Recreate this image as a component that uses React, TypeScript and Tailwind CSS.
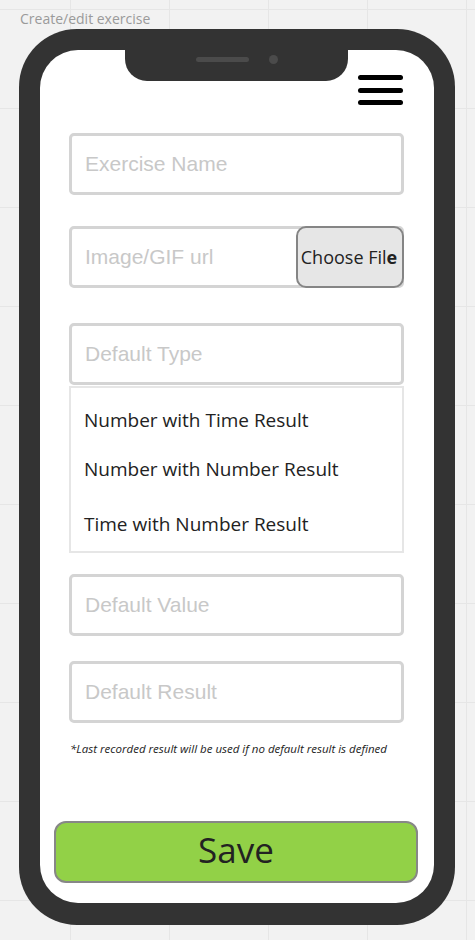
import { useState } from "react";

const typeOptions = [
  "Number with Time Result",
  "Number with Number Result",
  "Time with Number Result",
];

function TextField({ placeholder }: { placeholder: string }) {
  return (
    <input
      type="text"
      placeholder={placeholder}
      className="block w-full h-[62px] rounded-[5px] border-[3px] border-[#d4d4d4] bg-white px-[13px] font-['Liberation_Sans',Arial,sans-serif] text-[21px] text-[#333] placeholder:text-[#c8c8c8] outline-none"
    />
  );
}

export default function App() {
  const [type, setType] = useState("");

  return (
    <div className="relative w-full h-[940px] overflow-hidden bg-[#f2f2f2] bg-[linear-gradient(#e6e6e6_1px,transparent_1px),linear-gradient(90deg,#e6e6e6_1px,transparent_1px)] bg-[size:99px_99px] bg-[position:70px_9px] font-['Open_Sans',sans-serif]">
      {/* Page label */}
      <div className="pt-[9px] pl-[20px] text-[14px] leading-[19px] text-[#9a9a9a]">
        Create/edit exercise
      </div>

      {/* Phone frame */}
      <div className="mt-[1px] ml-[19px] w-[436px] h-[896px] rounded-[58px] bg-[#333333] pt-[21px] pb-[22px] px-[21px]">
        <div className="relative h-full w-full rounded-[38px] bg-white">
          {/* Notch */}
          <div className="absolute left-[85px] top-0 flex h-[31px] w-[223px] items-center justify-center gap-[20px] rounded-b-[22px] bg-[#333333] pb-[13px]">
            <div className="h-[5px] w-[53px] rounded-full bg-[#4b4b4b]" />
            <div className="h-[9px] w-[9px] rounded-full bg-[#4b4b4b]" />
          </div>

          {/* Header */}
          <div className="flex justify-end pt-[25px] pr-[31px]">
            <button className="flex w-[45px] flex-col gap-[7.5px]">
              <span className="block h-[5px] w-full rounded-full bg-black" />
              <span className="block h-[5px] w-full rounded-full bg-black" />
              <span className="block h-[5px] w-full rounded-full bg-black" />
            </button>
          </div>

          {/* Form */}
          <div className="px-[29px] pr-[30px] pt-[28px]">
            <TextField placeholder="Exercise Name" />

            <div className="mt-[31px] flex h-[62px] rounded-[5px] border-[3px] border-[#d4d4d4] bg-white">
              <input
                type="text"
                placeholder="Image/GIF url"
                className="min-w-0 flex-1 bg-transparent pl-[13px] font-['Liberation_Sans',Arial,sans-serif] text-[21px] text-[#333] placeholder:text-[#c8c8c8] outline-none"
              />
              <button className="-my-[3px] -mr-[3px] flex w-[108px] items-center justify-center overflow-hidden whitespace-nowrap rounded-[10px] border-2 border-[#858585] bg-[#e6e6e6] pr-[2px] text-[18px] text-[#222]">
                Choose Fil<b>e</b>
              </button>
            </div>

            <div className="mt-[35px]">
              <TextField placeholder="Default Type" />
              <div className="mt-[1px] border-2 border-[#e6e6e6] bg-white pl-[13px] pt-[20px] pb-[15px] text-[19px] leading-[24px] text-[#222]">
                {typeOptions.map((opt, i) => (
                  <div
                    key={opt}
                    onClick={() => setType(opt)}
                    className={`cursor-pointer ${
                      i === 1 ? "mt-[25px]" : i === 2 ? "mt-[31px]" : ""
                    } ${type === opt ? "font-semibold" : ""}`}
                  >
                    {opt}
                  </div>
                ))}
              </div>
            </div>

            <div className="mt-[21px]">
              <TextField placeholder="Default Value" />
            </div>
            <div className="mt-[25px]">
              <TextField placeholder="Default Result" />
            </div>

            <p className="mt-[19px] pl-[1px] text-[11.5px] leading-[14px] italic text-[#222]">
              *Last recorded result will be used if no default result is defined
            </p>
          </div>

          {/* Save */}
          <div className="px-[14px] pr-[16px] pt-[65px]">
            <button className="flex h-[62px] w-full items-center justify-center rounded-[12px] border-2 border-[#878787] bg-[#92d147] pb-[6px] text-[35px] leading-none text-[#222]">
              Save
            </button>
          </div>
        </div>
      </div>
    </div>
  );
}
